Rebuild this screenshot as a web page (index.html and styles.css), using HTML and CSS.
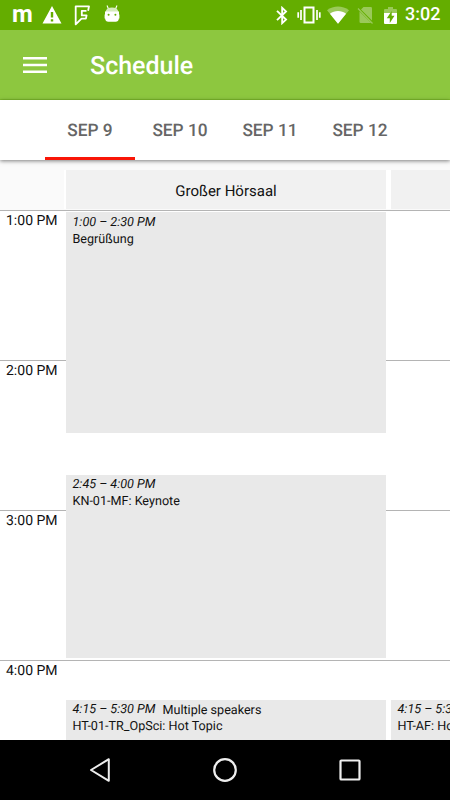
FILE: index.html
```html
<!DOCTYPE html>
<html lang="en">
  <head>
    <meta charset="UTF-8" />
    <meta name="viewport" content="width=device-width, initial-scale=1" />
    <title>Schedule</title>
    <link rel="stylesheet" href="styles.css">
  </head>
  <body>
    <div class="status-bar">
      <div class="notifications">
        <span class="m-icon">m</span>
        <svg class="warning" width="20" height="18" viewBox="0 0 20 18">
          <path fill="#fff" fill-rule="evenodd" d="M10 0 19.5 17.5H.5zM8.8 6v5.6h2.4V6zM8.8 13.2v2.3h2.4v-2.3z" />
        </svg>
        <svg class="foursquare" width="17" height="21" viewBox="0 0 17 21">
          <path fill="none" stroke="#fff" stroke-width="1.8" stroke-linejoin="round" d="M12.500 5.800H7.800v4.600h4.800l-.7 3.200H7.500l-5.800 5.800V1.300H15l-.9 4.500" />
        </svg>
        <svg class="droid" width="16" height="18" viewBox="0 0 16 18">
          <path stroke="#fff" stroke-width="1.1" d="M3 .5 4.5 4M13 .5 11.5 4" />
          <path fill="#d5ebbd" d="M1.5 7C2 4 4.4 2.6 8 2.6S14 4 14.5 7z" />
          <path fill="#fff" fill-rule="evenodd" d="M1 6.5h14v3h.4v4h-.5c-.3 2.3-1.3 3.3-3.2 3.3H4.3c-1.9 0-2.9-1-3.2-3.3H.6v-4H1zM4.6 8.8a1 1 0 1 0 0 2 1 1 0 0 0 0-2zM11.4 8.8a1 1 0 1 0 0 2 1 1 0 0 0 0-2z" />
        </svg>
      </div>
      <div class="system">
        <svg class="bluetooth" width="12" height="19" viewBox="0 0 12 19">
          <path fill="none" stroke="#fff" stroke-width="1.9" d="m1 4.900 9 8.700-3.800 3.500V1.900L10 5.400l-9 8.700" />
        </svg>
        <svg class="vibrate" width="24" height="18" viewBox="0 0 24 18">
          <path fill="none" stroke="#fff" stroke-width="2" d="M7.500 1.400h9v15.200h-9z" />
          <path stroke="#fff" stroke-width="1.7" d="M4 4v10M1.200 6.300v5.400M20 4v10M22.800 6.300v5.400" />
        </svg>
        <svg class="wifi" width="22" height="18" viewBox="0 0 22 18">
          <path fill="#fff" fill-opacity=".35" d="M0 4.200C6.500-.8 15.500-.8 22 4.200L11 17.700z" />
          <path fill="#fff" d="M2.900 7.800C7.500 4 14.500 4 19.100 7.800L11 17.700z" />
        </svg>
        <svg class="no-sim" width="17" height="19" viewBox="0 0 17 19">
          <path fill="#fff" fill-opacity=".35" d="M6.500 1h7.300q1.200 0 1.200 1.200v12.400L4 3.500z" />
          <path fill="#fff" fill-opacity=".35" d="M2.500 5.500 14 17H3.700q-1.200 0-1.200-1.200z" />
          <path stroke="#fff" stroke-opacity=".35" stroke-width="1.200" d="m1 2.500 14.500 15" />
        </svg>
        <svg class="battery" width="13" height="19" viewBox="0 0 13 19">
          <path fill="#fff" fill-opacity=".35" d="M4 1h5v2h3q1 0 1 1v3H0V4q0-1 1-1h3z" />
          <path fill="#fff" d="M0 7h13v10q0 1-1 1H1q-1 0-1-1z" />
          <path fill="#64ad00" d="M7.700 5 2.800 12.200h3V17l4.700-7.300H7.700z" />
        </svg>
        <span class="clock">3:02</span>
      </div>
    </div>

    <header class="app-bar">
      <svg width="24" height="16" viewBox="0 0 24 16">
        <path stroke="#fff" stroke-width="2.6" d="M0 1.300h24M0 8h24M0 14.700h24" />
      </svg>
      <h1 class="title">Schedule</h1>
    </header>

    <nav class="tabs">
      <div class="tab active">SEP 9</div>
      <div class="tab">SEP 10</div>
      <div class="tab">SEP 11</div>
      <div class="tab">SEP 12</div>
    </nav>

    <div class="rooms">
      <div class="room">Großer Hörsaal</div>
      <div class="room"></div>
    </div>

    <main class="calendar">
      <div class="hours">
        <div class="hour">1:00 PM</div>
        <div class="hour">2:00 PM</div>
        <div class="hour">3:00 PM</div>
        <div class="hour">4:00 PM</div>
      </div>
      <div class="column">
        <div class="event welcome">
          <div><span class="time">1:00 – 2:30 PM</span></div>
          <div>Begrüßung</div>
        </div>
        <div class="event keynote">
          <div><span class="time">2:45 – 4:00 PM</span></div>
          <div>KN-01-MF: Keynote</div>
        </div>
        <div class="event hot-topic">
          <div class="event-head"><span class="time">4:15 – 5:30 PM</span><span class="speakers">Multiple speakers</span></div>
          <div>HT-01-TR_OpSci: Hot Topic</div>
        </div>
      </div>
      <div class="column second">
        <div class="event hot-topic">
          <div><span class="time">4:15 – 5:30 PM</span></div>
          <div>HT-AF: Hot Topic</div>
        </div>
      </div>
    </main>

    <footer class="nav-bar">
      <svg width="24" height="26" viewBox="0 0 24 26">
        <path fill="none" stroke="#eee" stroke-width="2" stroke-linejoin="round" d="M20.800 2.200v21.600L3 13z" />
      </svg>
      <svg width="26" height="26" viewBox="0 0 26 26">
        <circle cx="13" cy="13" r="10.8" fill="none" stroke="#eee" stroke-width="2.2" />
      </svg>
      <svg width="24" height="24" viewBox="0 0 24 24">
        <rect x="2.5" y="2.5" width="19" height="19" rx=".8" fill="none" stroke="#eee" stroke-width="2.2" />
      </svg>
    </footer>
  </body>
</html>
```

FILE: styles.css
```css
* {
  box-sizing: border-box;
}

body {
  margin: 0;
  height: 100vh;
  display: flex;
  flex-direction: column;
  font-family: Roboto, sans-serif;
  text-rendering: geometricPrecision;
  background: white;
  color: #111;
  overflow: hidden;
}

svg {
  display: block;
  flex: none;
}

.status-bar {
  height: 30px;
  flex: none;
  display: flex;
  justify-content: space-between;
  padding: 0 10px 0 12px;
  background: #64ad00;
  color: white;
}

.notifications,
.system {
  display: flex;
  align-items: center;
}

.m-icon {
  width: 21px;
  font: bold 24px/24px Roboto, sans-serif;
  margin-top: -3px;
}

.warning {
  margin-left: 9px;
}

.foursquare {
  margin-left: 12px;
}

.droid {
  margin-left: 13px;
  margin-top: -2px;
}

.vibrate {
  margin-left: 9px;
}

.wifi {
  margin-left: 6px;
}

.no-sim {
  margin-left: 8px;
}

.battery {
  margin-left: 10px;
}

.clock {
  width: 35px;
  margin-left: 8px;
  font-size: 18px;
  font-weight: 500;
  line-height: 32px;
}

.app-bar {
  height: 70px;
  flex: none;
  display: flex;
  align-items: center;
  gap: 43px;
  padding-left: 23px;
  background: #8dc73f;
  border-bottom: 1px solid #7fbd2c;
}

.title {
  margin: 0;
  padding-top: 4px;
  color: white;
  font-size: 25px;
  font-weight: 500;
}

.tabs {
  height: 60px;
  flex: none;
  display: flex;
  padding-left: 45px;
  background: white;
  box-shadow: 0 1px 4px rgba(0, 0, 0, 0.5);
  position: relative;
}

.tab {
  width: 90px;
  text-align: center;
  font-size: 17.3px;
  font-weight: 500;
  line-height: 62px;
  color: #666;
}

.tab.active {
  border-bottom: 3px solid #f91607;
}

.rooms {
  height: 51px;
  flex: none;
  display: flex;
  padding: 10px 0 1px 64px;
  background: #fafafa;
  border-bottom: 1px solid #b4b4b4;
  overflow: hidden;
}

.room {
  width: 325px;
  flex: none;
  background: #f1f1f1;
  border: solid white;
  border-width: 0 3px 0 2px;
  text-align: center;
  font-size: 15px;
  line-height: 42px;
}

/* one hour is 150px */
.calendar {
  flex: 1;
  min-height: 0;
  display: flex;
  overflow: hidden;
  background: repeating-linear-gradient(white 0 149px, #b4b4b4 149px 150px);
}

.hours {
  width: 66px;
  flex: none;
}

.hour {
  height: 150px;
  padding-left: 6px;
  font-size: 14px;
  line-height: 20px;
}

.column {
  width: 320px;
  flex: none;
  padding-top: 1px;
}

.second {
  margin-left: 5px;
}

.event {
  padding: 2px 6.5px 0;
  background: #e9e9e9;
  font-size: 12.6px;
  line-height: 17px;
}

.welcome {
  height: 221px;
}

.keynote {
  height: 183px;
  margin-top: 42px;
  padding-top: 1px;
}

.hot-topic {
  height: 183px;
  margin-top: 42px;
  padding-top: 1px;
}

.second .hot-topic {
  margin-top: 488px;
}

.event-head {
  display: flex;
}

.time {
  font-style: italic;
}

.speakers {
  margin: 1px 0 -1px 7px;
}

.nav-bar {
  height: 60px;
  flex: none;
  display: flex;
  align-items: center;
  justify-content: space-between;
  padding: 0 88px;
  background: black;
}
```
